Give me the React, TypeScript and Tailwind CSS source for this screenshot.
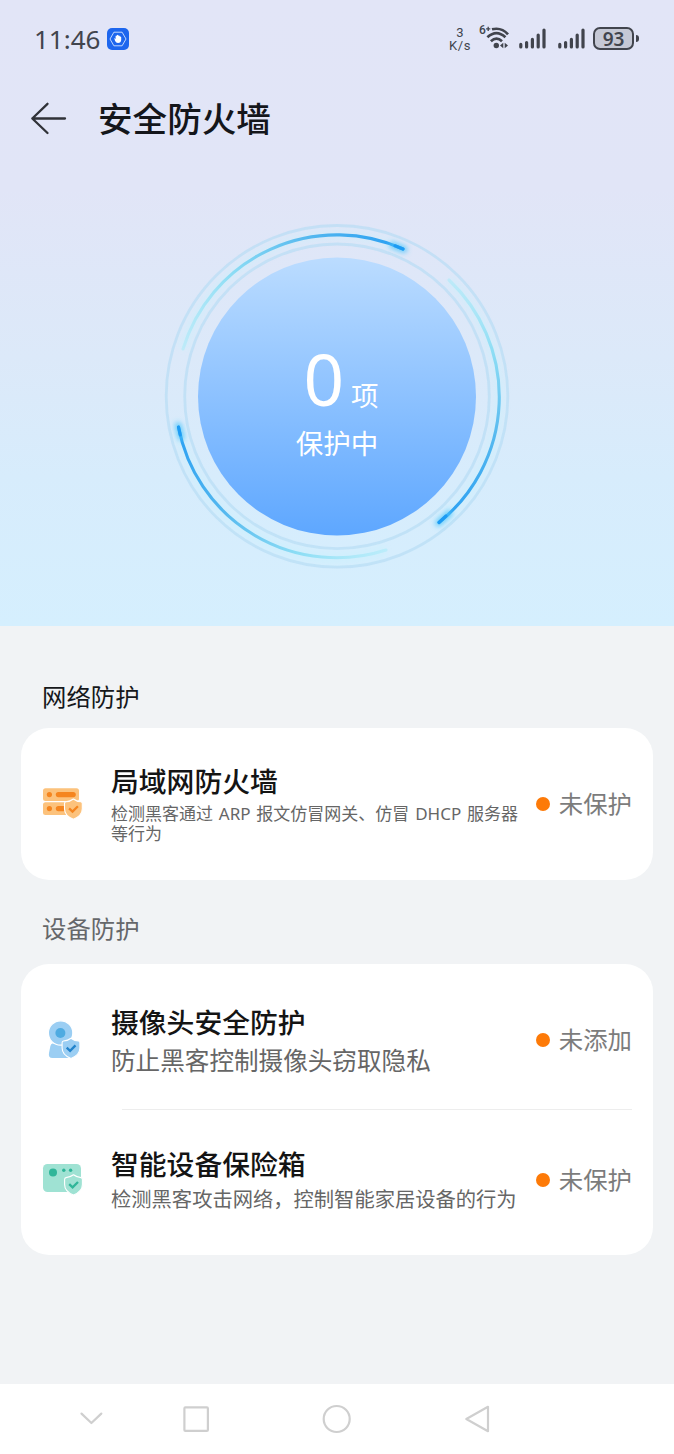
const Shield = ({ x, y, fill, check }: { x: number; y: number; fill: string; check: string }) => (
  <g transform={`translate(${x} ${y})`}>
    <path
      d="M9.5 0.8 C11.5 2.4 14 3.4 17 3.6 Q18.4 3.8 18.4 5.4 V10.5 C18.4 16 14.5 19 9.5 21 C4.5 19 0.6 16 0.6 10.5 V5.4 Q0.6 3.8 2 3.6 C5 3.4 7.5 2.4 9.5 0.8 Z"
      fill={fill}
      stroke="#fff"
      strokeWidth="1.1"
      strokeLinejoin="round"
    />
    <path d="M5.2 10.2 L8.6 13.4 L14 8" fill="none" stroke={check} strokeWidth="2.3" />
  </g>
);

const ServerIcon = () => (
  <svg className="w-11 h-11 shrink-0 -mt-0.5" viewBox="0 0 44 44">
    <rect x="2" y="7.3" width="36" height="12.6" rx="2.5" fill="#fcc27c" />
    <rect x="2" y="21.3" width="36" height="12.6" rx="2.5" fill="#fcc27c" />
    <circle cx="8.4" cy="13.6" r="2.6" fill="#f5851f" />
    <circle cx="8.4" cy="27.6" r="2.6" fill="#f5851f" />
    <rect x="14.8" y="11" width="20" height="5.2" rx="2.6" fill="#f5851f" />
    <rect x="14.8" y="25" width="16" height="5.2" rx="2.6" fill="#f5851f" />
    <Shield x={22.9} y={17.2} fill="#fcc27c" check="#f5851f" />
  </svg>
);

const CameraIcon = () => (
  <svg className="w-11 h-11 shrink-0 -mt-px" viewBox="0 0 44 44">
    <path d="M11.5 25.5 H28 L31 35 Q32 40 27.5 40 H11.5 Q7 40 8 35 L9.4 28 Q10 25.5 11.5 25.5 Z" fill="#9bcef3" />
    <circle cx="19.6" cy="15" r="12.2" fill="#9bcef3" stroke="#fff" strokeWidth="1.2" />
    <circle cx="19.4" cy="15" r="5" fill="#4fabe1" />
    <Shield x={20.5} y={19.4} fill="#9bcef3" check="#2384cc" />
  </svg>
);

const BoxIcon = () => (
  <svg className="w-11 h-11 shrink-0 -mt-0.5" viewBox="0 0 44 44">
    <rect x="2" y="7" width="38" height="28" rx="4.5" fill="#9fe2d3" />
    <circle cx="12" cy="15.4" r="4" fill="#2fb699" />
    <circle cx="22.8" cy="13.3" r="1.7" fill="#2fb699" />
    <circle cx="29.6" cy="13.3" r="1.7" fill="#2fb699" />
    <Shield x={23} y={17} fill="#9fe2d3" check="#2fb699" />
  </svg>
);

const Signal = () => (
  <svg className="w-7 h-[22px]" viewBox="0 0 28 22" fill="none" stroke="#41444d" strokeWidth="3.2" strokeLinecap="round">
    <path d="M1.8 19.9 V17.4 M7.6 19.9 V15.6 M13.4 19.9 V12.4 M19.2 19.9 V8 M25 19.9 V3" />
  </svg>
);

const Status = ({ text }: { text: string }) => (
  <div className="ml-auto flex items-center shrink-0">
    <span className="w-3.5 h-3.5 rounded-full bg-[#fd7a08] mr-[9px]"></span>
    <span className="text-[24.4px] leading-8 -mt-0.5 text-[#7c7c7c]">{text}</span>
  </div>
);

const arcs = [
  { id: "a", d: "M183 349 A161 161 0 0 1 403 249", x1: 183, y1: 349, x2: 403, y2: 249 },
  { id: "b", d: "M449 280 A161 161 0 0 1 439 522.5", x1: 449, y1: 280, x2: 460, y2: 522 },
  { id: "c", d: "M386 550 A161 161 0 0 1 178.5 427", x1: 386, y1: 550, x2: 178, y2: 427 },
];

const Ring = () => (
  <svg className="w-[360px] h-[360px]" viewBox="157 216 360 360" fill="none">
    <defs>
      <linearGradient id="disc" x1="0" y1="0" x2="0" y2="1">
        <stop offset="0" stopColor="#bbdcff" />
        <stop offset="1" stopColor="#5ea7ff" />
      </linearGradient>
      {arcs.map((a) => (
        <linearGradient key={a.id} id={a.id} gradientUnits="userSpaceOnUse" x1={a.x1} y1={a.y1} x2={a.x2} y2={a.y2}>
          <stop offset="0" stopColor="#a4eaf8" stopOpacity="0.5" />
          <stop offset="0.3" stopColor="#86dcf4" stopOpacity="0.9" />
          <stop offset="0.65" stopColor="#56b9ef" />
          <stop offset="1" stopColor="#2a9ff2" />
        </linearGradient>
      ))}
      <filter id="glow" filterUnits="userSpaceOnUse" x="157" y="216" width="360" height="360">
        <feGaussianBlur stdDeviation="2.6" />
      </filter>
    </defs>
    <circle cx="337" cy="396.3" r="170.8" stroke="#b5dcf5" strokeOpacity="0.65" strokeWidth="2.8" />
    <circle cx="337" cy="396.3" r="152.3" stroke="#b5dcf5" strokeOpacity="0.65" strokeWidth="2.8" />
    {arcs.map((a) => (
      <g key={a.id}>
        <path d={a.d} stroke="#c4f3fb" strokeOpacity="0.3" strokeWidth="12" filter="url(#glow)" />
        <path d={a.d} stroke={`url(#${a.id})`} strokeWidth="3.1" strokeLinecap="round" />
      </g>
    ))}
    <g stroke="#43c2fb" strokeOpacity="0.7" strokeWidth="7" strokeLinecap="round" filter="url(#glow)">
      <path d="M393 245.2 L404 249.5" />
      <path d="M449 513.5 L438.5 523" />
      <path d="M181 437 L178.2 425.5" />
    </g>
    <g stroke="#1c9bf3" strokeWidth="3.2" strokeLinecap="round">
      <path d="M395 245.8 L403 249" />
      <path d="M446 516 L439 522.5" />
      <path d="M180.2 435 L178.5 427" />
    </g>
    <circle cx="337" cy="396.5" r="139" fill="url(#disc)" />
  </svg>
);

export default function App() {
  return (
    <div className="w-[674px] h-[1454px] overflow-hidden flex flex-col bg-[#f1f3f5] font-['Noto_Sans_CJK_SC',sans-serif]">

      <section className="h-[626px] shrink-0 flex flex-col bg-[linear-gradient(180deg,#e2e5f7_0%,#e1e5f7_30%,#dce9f9_57%,#d7ecfc_76%,#d5effe_100%)]">

        <header className="h-[76px] flex items-center pl-[34px] pr-[35px] text-[#41444d]">
          <span className="font-['Noto_Sans'] text-[26px] leading-8 w-[73px] mt-0.5">11:46</span>
          <svg className="w-[22px] h-[22px] mt-px" viewBox="0 0 22 22" fill="none">
            <rect width="22" height="22" rx="5" fill="#1d66ee" />
            <path d="M6.9 4.2 H15.1 L19 11 L15.1 17.8 H6.9 L3 11 Z" stroke="#d3e3ff" strokeWidth="0.9" />
            <path d="M7.2 10 L8.6 11 V8 Q9.3 7 9.9 8 V7.2 Q10.6 6.2 11.3 7.2 V7.7 Q12.1 7 12.8 8 V8.8 Q13.9 8 14.2 9.3 V12 Q14 15 11 15 Q9 15 8.1 13 Z" fill="#fff" />
          </svg>
          <div className="ml-auto flex items-center">
            <div className="w-6 mr-2 mt-0.5 text-center font-['Roboto'] text-[13px] leading-[13px]">
              <p>3</p>
              <p className="tracking-wider">K/s</p>
            </div>
            <div className="relative w-[31px] h-[26px] mr-2">
              <span className="absolute -left-px -top-px font-['Roboto'] font-medium text-[12px] leading-3">6</span>
              <svg className="w-[31px] h-[26px]" viewBox="0 0 31 26" fill="none" stroke="#41444d" strokeWidth="2.7">
                <path d="M6.1 3.8 H10.3 M8.2 1.7 V5.9" strokeWidth="1.3" />
                <path d="M12 4.3 Q21.5 2 28 9.3" />
                <path d="M7.4 12.3 Q16.5 3.9 25.4 12.3" />
                <path d="M10.9 16.2 Q16.5 11 22 16.2" />
                <circle cx="16.3" cy="20.5" r="2.7" fill="#41444d" stroke="none" />
                <path d="M23.3 17.8 V23.2 L20 20.5 Z M24.7 17.8 V23.2 L28 20.5 Z" fill="#41444d" stroke="none" />
              </svg>
            </div>
            <Signal />
            <span className="w-[11px]"></span>
            <Signal />
            <div className="ml-[7px] w-[41px] h-[23px] rounded-[7px] border-2 border-[#41444d] bg-[#c5c8d5] flex items-center justify-center">
              <span className="font-['Noto_Sans'] font-semibold text-[19px] leading-5 mt-px">93</span>
            </div>
            <span className="w-[3px] h-[7px] ml-0.5 rounded-r bg-[#41444d]"></span>
          </div>
        </header>

        <nav className="h-[86px] flex items-center pl-[30px]">
          <svg className="w-[37px] h-9" viewBox="0 0 37 36" fill="none" stroke="#303238" strokeWidth="2.3" strokeLinecap="round" strokeLinejoin="round">
            <path d="M17.5 2.8 L2.3 17.5 L17.5 32 M2.3 17.5 H35" />
          </svg>
          <h1 className="ml-[31px] -mt-1 text-[34.6px] leading-[48px] font-medium text-[#14161b]">安全防火墙</h1>
        </nav>

        <div className="relative w-[360px] h-[360px] mt-[54px] mx-auto">
          <Ring />
          <div className="absolute inset-0 text-white">
            <p className="flex items-baseline justify-center h-[84px] mt-[121px] pl-2">
              <span className="font-['Noto_Sans'] text-[71px] leading-[84px]">0</span>
              <span className="ml-[7px] text-[27.5px]">项</span>
            </p>
            <p className="text-center text-[27.5px] leading-9 mt-[3px]">保护中</p>
          </div>
        </div>
      </section>

      <main className="flex-1 px-[21px]">

        <h2 className="mt-[52px] ml-[21px] text-[24.4px] leading-9 text-[#16181b]">网络防护</h2>
        <section className="mt-3.5 h-[152px] bg-white rounded-[28px] pl-5 pr-[21px]">
          <article className="h-full flex items-center">
            <ServerIcon />
            <div className="ml-[26px] w-[412px]">
              <h3 className="text-[27.8px] leading-8 font-medium text-[#141414]">局域网防火墙</h3>
              <p className="mt-2 font-['Noto_Sans','Noto_Sans_CJK_SC',sans-serif] text-[17px] leading-5 text-[#666] [word-spacing:1.4px]">检测黑客通过 ARP 报文仿冒网关、仿冒 DHCP 服务器等行为</p>
            </div>
            <Status text="未保护" />
          </article>
        </section>

        <h2 className="mt-[30px] ml-[21px] text-[24.4px] leading-9 text-[#65676a]">设备防护</h2>
        <section className="mt-[18px] h-[291px] bg-white rounded-[28px] pl-5 pr-[21px]">
          <article className="h-[145px] pt-[7px] flex items-center">
            <CameraIcon />
            <div className="ml-[26px] -mt-px">
              <h3 className="text-[27.8px] leading-8 font-medium text-[#141414]">摄像头安全防护</h3>
              <p className="mt-[7px] text-[24.6px] leading-[30px] text-[#666]">防止黑客控制摄像头窃取隐私</p>
            </div>
            <Status text="未添加" />
          </article>
          <hr className="ml-[81px] border-[#ededed]" />
          <article className="h-[145px] pb-[6px] flex items-center">
            <BoxIcon />
            <div className="ml-[26px] -mt-px">
              <h3 className="text-[27.8px] leading-8 font-medium text-[#141414]">智能设备保险箱</h3>
              <p className="mt-1.5 text-[20.3px] leading-[26px] text-[#666] whitespace-nowrap">检测黑客攻击网络，控制智能家居设备的行为</p>
            </div>
            <Status text="未保护" />
          </article>
        </section>
      </main>

      <footer className="h-[70px] shrink-0 bg-white flex items-center pl-[79px]">
        <svg className="w-[420px] h-[34px]" viewBox="0 0 420 34" fill="none" stroke="#cfcfcf" strokeWidth="2.2" strokeLinecap="round" strokeLinejoin="round">
          <path d="M2.5 11.6 L12.4 21 L22.3 11.6" />
          <rect x="105.4" y="5.4" width="23.5" height="23.5" rx="1" />
          <circle cx="257.7" cy="17" r="13" />
          <path d="M409 4.8 V29.2 L387.3 17 Z" />
        </svg>
      </footer>
    </div>
  );
}
